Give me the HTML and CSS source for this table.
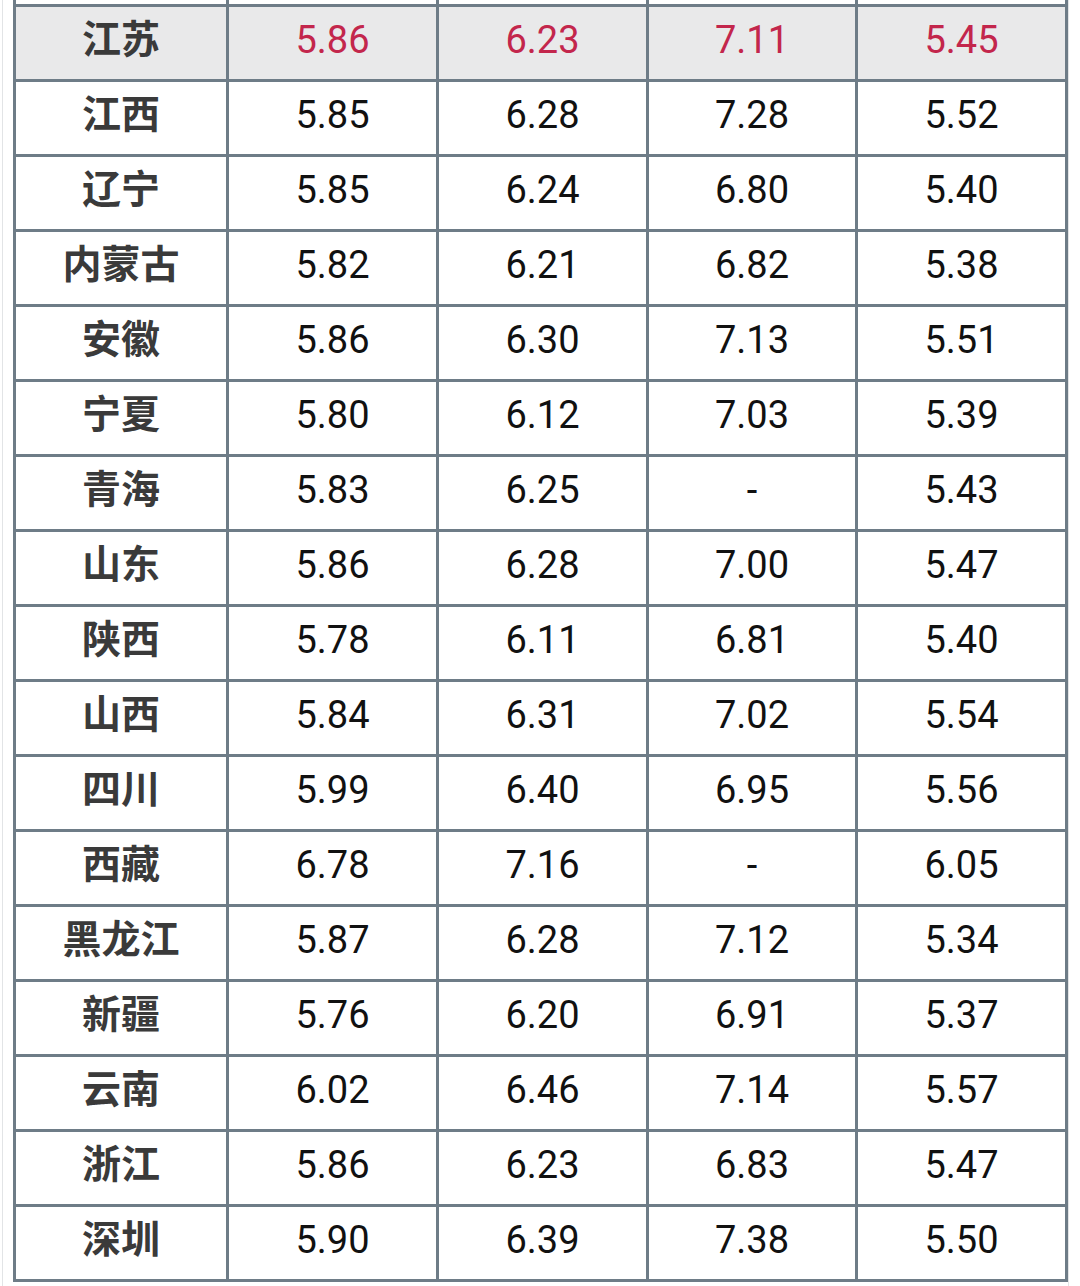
FILE: index.html
```html
<!DOCTYPE html>
<html lang="zh-CN">
<head>
<meta charset="utf-8">
<link rel="stylesheet" href="styles.css">
</head>
<body>
<div class="frame">
  <div class="grid">
    <div class="cut"></div><div class="cut"></div><div class="cut"></div><div class="cut"></div><div class="cut"></div>

    <div class="name hl">江苏</div><div class="num hl red">5.86</div><div class="num hl red">6.23</div><div class="num hl red">7.11</div><div class="num hl red">5.45</div>
    <div class="name">江西</div><div class="num">5.85</div><div class="num">6.28</div><div class="num">7.28</div><div class="num">5.52</div>
    <div class="name">辽宁</div><div class="num">5.85</div><div class="num">6.24</div><div class="num">6.80</div><div class="num">5.40</div>
    <div class="name">内蒙古</div><div class="num">5.82</div><div class="num">6.21</div><div class="num">6.82</div><div class="num">5.38</div>
    <div class="name">安徽</div><div class="num">5.86</div><div class="num">6.30</div><div class="num">7.13</div><div class="num">5.51</div>
    <div class="name">宁夏</div><div class="num">5.80</div><div class="num">6.12</div><div class="num">7.03</div><div class="num">5.39</div>
    <div class="name">青海</div><div class="num">5.83</div><div class="num">6.25</div><div class="num">-</div><div class="num">5.43</div>
    <div class="name">山东</div><div class="num">5.86</div><div class="num">6.28</div><div class="num">7.00</div><div class="num">5.47</div>
    <div class="name">陕西</div><div class="num">5.78</div><div class="num">6.11</div><div class="num">6.81</div><div class="num">5.40</div>
    <div class="name">山西</div><div class="num">5.84</div><div class="num">6.31</div><div class="num">7.02</div><div class="num">5.54</div>
    <div class="name">四川</div><div class="num">5.99</div><div class="num">6.40</div><div class="num">6.95</div><div class="num">5.56</div>
    <div class="name">西藏</div><div class="num">6.78</div><div class="num">7.16</div><div class="num">-</div><div class="num">6.05</div>
    <div class="name">黑龙江</div><div class="num">5.87</div><div class="num">6.28</div><div class="num">7.12</div><div class="num">5.34</div>
    <div class="name">新疆</div><div class="num">5.76</div><div class="num">6.20</div><div class="num">6.91</div><div class="num">5.37</div>
    <div class="name">云南</div><div class="num">6.02</div><div class="num">6.46</div><div class="num">7.14</div><div class="num">5.57</div>
    <div class="name">浙江</div><div class="num">5.86</div><div class="num">6.23</div><div class="num">6.83</div><div class="num">5.47</div>
    <div class="name">深圳</div><div class="num">5.90</div><div class="num">6.39</div><div class="num">7.38</div><div class="num">5.50</div>
  </div>
</div>
</body>
</html>
```

FILE: styles.css
```css
html, body {
  margin: 0;
  padding: 0;
  background: #ffffff;
}

body {
  width: 1080px;
  height: 1286px;
  overflow: hidden;
}

.frame {
  margin-left: 2px;
  width: 1067px;
  height: 1286px;
  border-left: 1px solid #e2e4e6;
  border-right: 1px solid #e2e4e6;
  box-sizing: border-box;
  padding-left: 10px;
}

.grid {
  display: grid;
  grid-template-columns: 210px 207px 207px 206px 207px;
  grid-template-rows: 4px repeat(17, 72px);
  gap: 3px;
  padding: 0 3px 3px 3px;
  background: #6e7c87;
  width: max-content;
}

.grid > div {
  background: #ffffff;
  display: flex;
  align-items: center;
  justify-content: center;
  padding-bottom: 6px;
  box-sizing: border-box;
}

.grid > .cut {
  padding: 0;
}

.grid > .hl {
  background: #e9e9ea;
}

.grid > .name {
  font-family: "Noto Sans CJK SC", "Noto Sans", sans-serif;
  font-weight: 700;
  font-size: 39px;
  color: #3a3a3a;
  padding-bottom: 14px;
}

.num {
  font-family: Roboto, "Noto Sans", sans-serif;
  font-weight: 400;
  font-size: 38px;
  color: #111111;
}

.num.red {
  color: #c3264c;
}
```
